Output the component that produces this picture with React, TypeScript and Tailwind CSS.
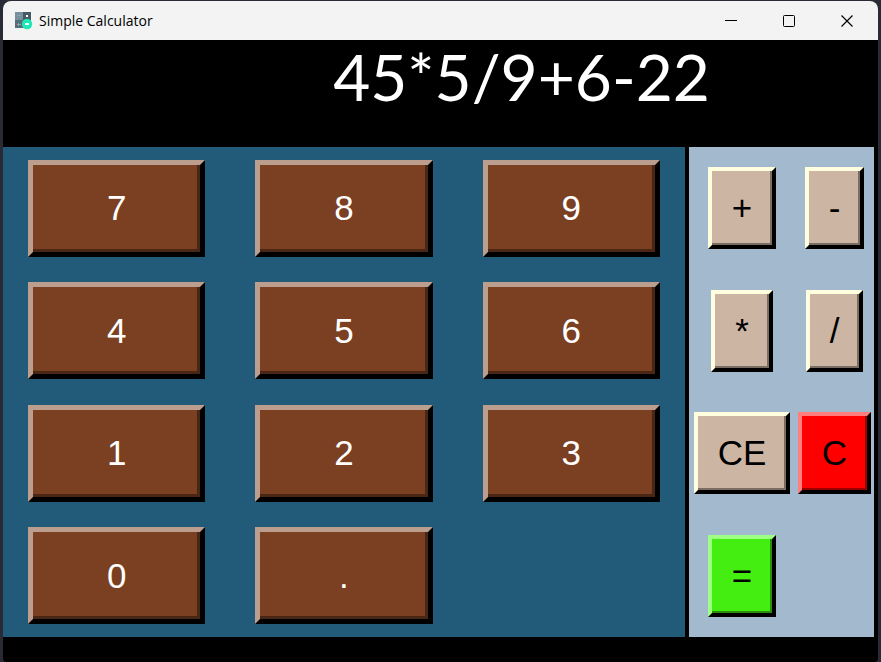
import React from "react";

const digitKeys = ["7", "8", "9", "4", "5", "6", "1", "2", "3", "0", "."];

const tan =
  "border-t-[#ffffe0] border-l-[#ffffe0] bg-[#cdb5a3] shadow-[inset_-2px_-2px_0_#7b6d62]";
const red =
  "border-t-[#ff7f7f] border-l-[#ff7f7f] bg-[#ff0000] shadow-[inset_-2px_-2px_0_#990000]";
const green =
  "border-t-[#9dff83] border-l-[#9dff83] bg-[#44ee11] shadow-[inset_-2px_-2px_0_#298f0a]";

const operatorKeys = [
  { label: "+", tone: tan },
  { label: "-", tone: tan },
  { label: "*", tone: tan },
  { label: "/", tone: tan },
  { label: "CE", tone: tan },
  { label: "C", tone: red },
  { label: "=", tone: green },
];

function AppIcon() {
  return (
    <svg width="18" height="18" viewBox="0 0 18 18" aria-hidden="true">
      <path fill="#78909c" d="M0 0h8v8H0z" />
      <path fill="#455a64" d="M8 0h8v8H8z" />
      <path fill="#546e7a" d="M0 8h8v8H0z" />
      <path fill="#607d8b" d="M8 8h8v8H8z" />
      <path stroke="#90a4ae" d="M2 3.5h4M2 12.5h4M3.5 11v3" />
      <path fill="#fff" d="M11 3h2v2h-2z" />
      <circle cx="12" cy="12" r="5.2" fill="#1de9b6" />
      <path fill="#fff" d="M10 11h4v2h-4z" />
    </svg>
  );
}

function TitleBar() {
  const control = "flex w-[58px] items-center justify-center";
  return (
    <header className="flex h-[39px] shrink-0 items-stretch bg-[#f3f3f3] pr-0.5 text-black">
      <div className="flex flex-1 items-center gap-1.5 pl-3">
        <AppIcon />
        <h1 className="font-['Open_Sans',sans-serif] text-[14px] leading-5">Simple Calculator</h1>
      </div>
      <button aria-label="Minimize" className={control}>
        <svg width="12" height="12" stroke="#000">
          <path d="M0 5.5h12" />
        </svg>
      </button>
      <button aria-label="Maximize" className={control}>
        <svg width="12" height="12" fill="none" stroke="#000">
          <rect x="0.5" y="0.5" width="11" height="11" rx="1" />
        </svg>
      </button>
      <button aria-label="Close" className={control}>
        <svg width="12" height="12" stroke="#000" strokeWidth="1.2">
          <path d="M0.5 0.5l11 11M11.5 0.5l-11 11" />
        </svg>
      </button>
    </header>
  );
}

export default function App() {
  return (
    <div className="h-screen bg-[#282a35] pt-px pr-[3px] pl-[3px]">
      <main className="flex h-full flex-col overflow-hidden rounded-t-lg rounded-b-sm bg-black font-['Liberation_Sans',Arial,sans-serif]">
        <TitleBar />
        <div className="flex h-[107px] shrink-0 items-start justify-end pr-[168px]">
          <output className="font-[Lato,sans-serif] text-[64px] leading-[74px] text-white">
            45*5/9+6-22
          </output>
        </div>
        <div className="flex min-h-0 flex-1 gap-1 pr-1 pb-[25px] text-[35px] leading-10">
          <section
            aria-label="Digits"
            className="grid flex-1 grid-cols-3 grid-rows-4 items-center justify-items-center bg-[#215b79]"
          >
            {digitKeys.map((key) => (
              <button
                key={key}
                className="h-[97px] w-[78%] border-[5px] border-t-[#bc9e8e] border-r-black border-b-black border-l-[#bc9e8e] bg-[#7b3f21] text-white shadow-[inset_-3px_-3px_0_#4a2614]"
              >
                {key}
              </button>
            ))}
          </section>
          <section
            aria-label="Operations"
            className="grid shrink-0 grid-cols-[106px_79px] grid-rows-4 items-center justify-items-center bg-[#a3b9ce] text-black"
          >
            {operatorKeys.map(({ label, tone }) => (
              <button
                key={label}
                className={`h-[82px] border-4 border-r-black border-b-black px-5 ${tone}`}
              >
                {label}
              </button>
            ))}
          </section>
        </div>
      </main>
    </div>
  );
}
